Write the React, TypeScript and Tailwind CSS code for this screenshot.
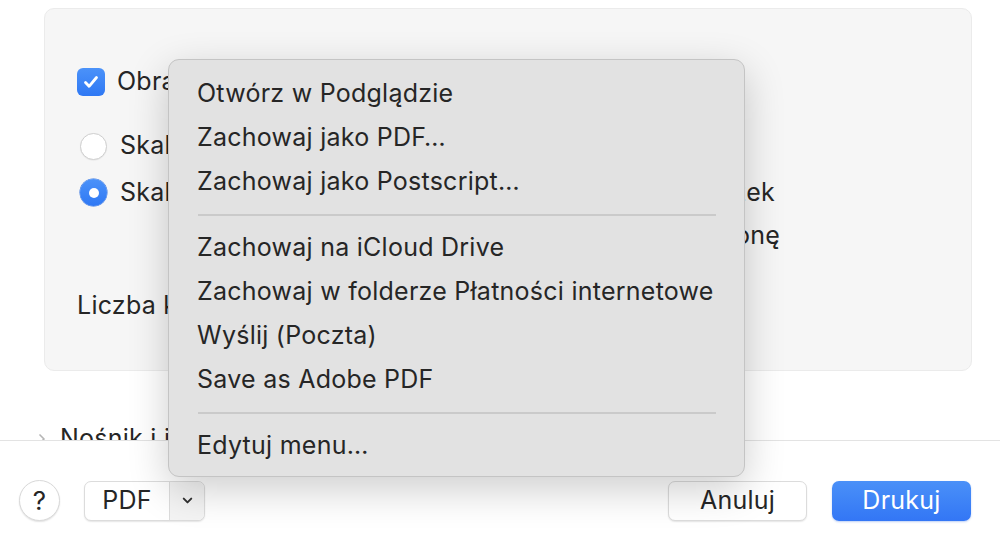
import { ChevronDown, ChevronRight } from 'lucide-react';

const font = { fontFamily: 'Inter, "Liberation Sans", sans-serif' };

function Radio({ checked }: { checked?: boolean }) {
  if (checked) {
    return (
      <span className="flex h-[27px] w-[27px] shrink-0 items-center justify-center rounded-full bg-gradient-to-b from-[#4b92f9] to-[#2f78f4] shadow-[0_0_0_0.5px_#2d6fe0]">
        <span className="h-[10px] w-[10px] rounded-full bg-white" />
      </span>
    );
  }
  return (
    <span className="h-[27px] w-[27px] shrink-0 rounded-full border border-[#cfcfcf] bg-white shadow-[0_0.5px_1px_rgba(0,0,0,0.08)]" />
  );
}

function MenuItem({ label }: { label: string }) {
  return (
    <div className="flex h-[44px] items-center pl-[28px] text-[25px] tracking-[0.25px] text-[#262626]">{label}</div>
  );
}

function MenuSeparator() {
  return (
    <div className="flex h-[22px] items-center pl-[29px] pr-[28px]">
      <div className="h-[2px] w-full bg-[#cacaca]" />
    </div>
  );
}

export default function App() {
  return (
    <div
      className="relative h-[550px] w-[1000px] overflow-hidden bg-white text-[25px] tracking-[0.25px] text-[#262626]"
      style={font}
    >
      <div className="h-[440px] overflow-hidden">
        <div className="ml-[44px] mt-[8px] h-[363px] w-[928px] rounded-[10px] border border-[#ebebeb] bg-[#f6f6f6] pl-[32px] pt-[59px]">
          <div className="flex h-[28px] items-center gap-[12px]">
            <span className="flex h-[28px] w-[28px] items-center justify-center rounded-[6px] bg-gradient-to-b from-[#4b92f9] to-[#2f78f4]">
              <svg width="18" height="18" viewBox="0 0 18 18" fill="none">
                <path d="M3.5 9.5l3.6 3.8L14.5 4.5" stroke="white" strokeWidth="2.8" strokeLinecap="round" strokeLinejoin="round" />
              </svg>
            </span>
            <span>Obracaj automatycznie</span>
          </div>
          <div className="mt-[36px] flex h-[28px] items-center gap-[13px] pl-[3px]">
            <Radio />
            <span>Skala: 100%</span>
          </div>
          <div className="mt-[19px] flex items-start gap-[13px] pl-[3px]">
            <Radio checked />
            <span className="w-[434px] shrink-0 whitespace-nowrap leading-[27px]">Skaluj, aby dopasować:</span>
            <div className="flex w-[213px] flex-col items-end gap-[16px] whitespace-nowrap leading-[27px]">
              <span className="pr-[5px]">Drukuj cały obrazek</span>
              <span>Wypełnij całą stronę</span>
            </div>
          </div>
          <div className="mt-[42px] leading-[28px]">Liczba kopii na arkusz:</div>
        </div>
        <div className="mt-[49px] flex items-center gap-[10px] pl-[34px]">
          <ChevronRight className="h-[16px] w-[16px] text-[#b5b5b5]" strokeWidth={2.5} />
          <span>Nośnik i jakość</span>
        </div>
      </div>

      <div className="flex items-center border-t border-[#e3e3e3] pl-[19px] pr-[29px] pt-[39px]">
        <button className="flex h-[41px] w-[41px] items-center justify-center rounded-full border border-[#d9d9d9] bg-white text-[26px] shadow-[0_1px_1.5px_rgba(0,0,0,0.12)]">
          ?
        </button>
        <div className="ml-[24px] flex h-[40px] w-[121px] overflow-hidden rounded-[7px] border border-[#dcdcdc] bg-white shadow-[0_1px_1.5px_rgba(0,0,0,0.1)]">
          <span className="flex w-[84px] items-center justify-center">PDF</span>
          <span className="flex flex-1 items-center justify-center border-l border-[#dcdcdc] bg-[#f4f4f4]">
            <ChevronDown className="h-[15px] w-[15px] text-[#333]" strokeWidth={3.2} />
          </span>
        </div>
        <button className="ml-auto flex h-[40px] w-[139px] items-center justify-center rounded-[7px] border border-[#dcdcdc] bg-white shadow-[0_1px_1.5px_rgba(0,0,0,0.1)]">
          Anuluj
        </button>
        <button className="ml-[25px] flex h-[40px] w-[139px] items-center justify-center rounded-[7px] bg-gradient-to-b from-[#4a90f8] to-[#3376f5] text-white shadow-[0_1px_2px_rgba(40,100,220,0.3)]">
          Drukuj
        </button>
      </div>

      <div className="absolute left-[168px] top-[59px] w-[577px] rounded-[11px] border border-[#c4c4c4] bg-[#e2e2e2] pb-[8px] pt-[12px] shadow-[0_12px_40px_rgba(0,0,0,0.2)]">
        <MenuItem label="Otwórz w Podglądzie" />
        <MenuItem label="Zachowaj jako PDF…" />
        <MenuItem label="Zachowaj jako Postscript…" />
        <MenuSeparator />
        <MenuItem label="Zachowaj na iCloud Drive" />
        <MenuItem label="Zachowaj w folderze Płatności internetowe" />
        <MenuItem label="Wyślij (Poczta)" />
        <MenuItem label="Save as Adobe PDF" />
        <MenuSeparator />
        <MenuItem label="Edytuj menu…" />
      </div>
    </div>
  );
}
